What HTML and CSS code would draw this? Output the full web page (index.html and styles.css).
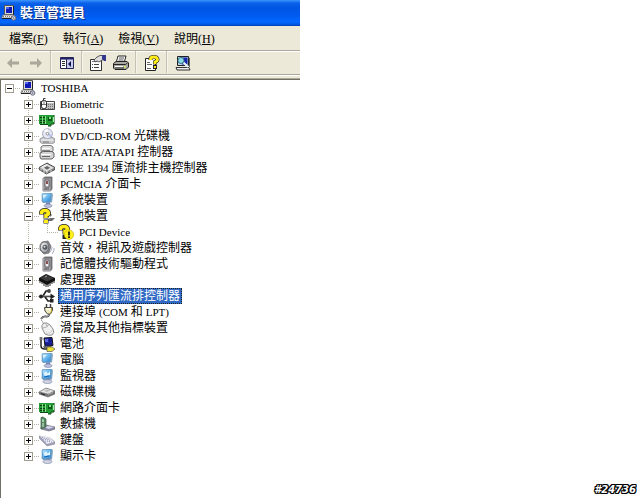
FILE: index.html
```html
<!DOCTYPE html>
<html lang="zh-Hant">
<head>
<meta charset="utf-8">
<title>裝置管理員</title>
<link rel="stylesheet" href="styles.css">
</head>
<body>
<svg class="sprite" aria-hidden="true">
  <defs>
    <linearGradient id="screen" x1="0" y1="0" x2="1" y2="1"><stop offset="0" stop-color="#d4f1ff"/><stop offset=".5" stop-color="#68b8ef"/><stop offset="1" stop-color="#287fce"/></linearGradient>
    <linearGradient id="metal" x1="0" y1="0" x2="1" y2="1"><stop offset="0" stop-color="#fff"/><stop offset="1" stop-color="#8c8c98"/></linearGradient>
  </defs>
  <symbol id="pc" viewBox="0 0 16 16">
    <path d="M3.500 .5h9v9h-9z" fill="#dcdcd4" stroke="#555"/><path d="M12.500 1v9" stroke="#222"/>
    <path d="M5 2h6v6H5z" fill="#1018b8"/><path d="M5 2h3v2H5z" fill="#4c68f0"/>
    <path d="M2 10h11l1 3H.8z" fill="#f2f2ee" stroke="#777" stroke-width=".8"/>
    <path d="M1 13.500h11" stroke="#222"/><path d="M2 11.500h9" stroke="#777" stroke-dasharray="1 1"/>
    <circle cx="12.700" cy="13" r="2.200" fill="#d8dce8" stroke="#667"/><circle cx="12.700" cy="13" r=".7" fill="#556"/>
  </symbol>
  <symbol id="bio" viewBox="0 0 16 16">
    <path d="M1.500 5.500h14v8h-14z" fill="#bcbcbc" stroke="#444"/><path d="M8 6.500h7" stroke="#fff"/>
    <path d="M9 8.500h6M9 10.500h6M9 12.500h6" stroke="#777" stroke-dasharray="1 1"/>
    <path d="M4.500 5V2.500h2" fill="none" stroke="#333"/>
    <rect x="2.500" y="4.500" width="5" height="8" rx="2" fill="#fff" stroke="#222"/><path d="M5 5v3M3 8.500h4" stroke="#555" stroke-width=".8"/>
  </symbol>
  <symbol id="card" viewBox="0 0 16 16">
    <path d="M0 3h15v9h-3v2H9v-2H0z" fill="#239b35"/><path d="M15 3v9h-3v2H9M1 12.500h8" fill="none" stroke="#0c4516"/>
    <path d="M1 5.500h6M1 8.500h6M1 10.500h6" stroke="#0b3d13"/><path d="M3.500 4v8M6.500 4v8" stroke="#87dc88"/>
    <path d="M9 5h4v4H9z" fill="#0c5819"/><path d="M10 5h2v2h-2z" fill="#8ae286"/><path d="M14.500 5v5" stroke="#b5efae"/>
  </symbol>
  <symbol id="cd" viewBox="0 0 16 16">
    <path d="M1 11l3-2h9l3 2v3l-3 2H4l-3-2z" fill="#c6c6cb" stroke="#888" stroke-width=".8"/><path d="M2 12h12" stroke="#fff"/>
    <circle cx="8.500" cy="5.700" r="5" fill="#e4e6f4" stroke="#9a9dac" stroke-width=".8"/>
    <path d="M8.500 5.700L5 2.500a5 5 0 0 1 4-1.500z" fill="#fff"/><path d="M8.500 5.700l4.500 1-2 3z" fill="#b7c4ec"/>
    <circle cx="8.500" cy="5.700" r="1.300" fill="#fff" stroke="#777" stroke-width=".8"/>
    <path d="M4 14h6" stroke="#777"/>
  </symbol>
  <symbol id="ide" viewBox="0 0 16 16">
    <path d="M2 3l2-1.500h8L14 3v4l-2 2H3L2 7z" fill="#ddd" stroke="#666" stroke-width=".9"/><path d="M3 4.500h8" stroke="#fff"/><path d="M3 6.500h8" stroke="#888"/>
    <path d="M1 9l3-1.500h9L15 9v4l-2 2H2l-1-2z" fill="#d4d4d4" stroke="#555" stroke-width=".9"/><path d="M2 10.500h10" stroke="#fff"/><path d="M3 12.500h8" stroke="#666"/>
  </symbol>
  <symbol id="fire" viewBox="0 0 16 16">
    <path d="M0 7.500L8 3l8 4.500v2L7.500 14 0 9.500z" fill="#858585" stroke="#333" stroke-width=".8"/>
    <path d="M1 7.500L8 4l7 3.700-7.500 4z" fill="#dedede"/><path d="M5 7.700l3-1.700 3 1.700-3 2z" fill="#666"/>
    <path d="M8 13.500v-2.500M2 8.500v2M5 10v3M12 10v2" stroke="#eee" stroke-width=".8"/><path d="M3 7l5-2.500" stroke="#fff"/>
  </symbol>
  <symbol id="pcmcia" viewBox="0 0 16 16">
    <path d="M4 2.500L5.500 1H13v12l-1.500 2H4z" fill="#77767b" stroke="#666" stroke-width=".8"/><path d="M4 2.500h7.500V15H4z" fill="#a7a4a9"/>
    <path d="M6 4h4v7H6z" fill="#eeecef" stroke="#444" stroke-width=".8"/><path d="M7 5h2v3H7z" fill="#8c4f51"/><path d="M5 13h5" stroke="#555"/>
  </symbol>
  <symbol id="monitor" viewBox="0 0 16 16">
    <path d="M3 1.500L13 1l1 1.500-1 8-9 .5-1.500-2z" fill="#86a6bd"/>
    <path d="M3 2l9-.5-.5 8-7.500.8z" fill="url(#screen)" stroke="#579ccb" stroke-width=".7"/><path d="M4 3l4-.3-3.600 4z" fill="#fff" opacity=".65"/>
    <path d="M7 10.500l4-.5v3H7z" fill="#7686c4"/><ellipse cx="9" cy="13.700" rx="4" ry="1.700" fill="#bcc2df" stroke="#7f86a6" stroke-width=".7"/>
  </symbol>
  <symbol id="video" viewBox="0 0 16 16">
    <path d="M3 1.500L13 1l1 1.500-1 9-9 .5-1.500-2z" fill="#7ca2be"/>
    <path d="M3 2l9-.5-.5 8.500-7.500.8z" fill="url(#screen)" stroke="#4a94ca" stroke-width=".7"/>
    <path d="M5 5l2-1.500 2 2L11 3v4L5.500 8z" fill="#e3f6ff"/><path d="M5 9l5-1" stroke="#1167b0"/>
    <path d="M7 11l4-.5v2H7z" fill="#7787b4"/><ellipse cx="8.500" cy="13.600" rx="4.500" ry="1.900" fill="#d0d4e6" stroke="#7d86a5" stroke-width=".7"/>
  </symbol>
  <symbol id="unknown" viewBox="0 0 16 16">
    <path d="M8 12l3-2h5l-3 3H9zM11 5l2 2-2 2z" fill="#6d6d6d"/>
    <path d="M2.500 6.500V4.500Q3 2.500 6 2.500T9.500 5Q9.500 6.500 7 7.500V10.500" fill="none" stroke="#222" stroke-width="5"/><path d="M4.500 11.500h5v4h-5z" fill="#222"/>
    <path d="M2.500 6V4.500Q3 2.500 6 2.500T9.500 5Q9.500 6.500 7 7.500V10" fill="none" stroke="#ffec18" stroke-width="3.600"/><path d="M5 12h4v3H5z" fill="#ffec18"/>
  </symbol>
  <symbol id="warn" viewBox="0 0 16 16">
    <path d="M2.500 6.500V4.500Q3 2.500 6 2.500T9.500 5Q9.500 6.500 7 7.500V10.500" fill="none" stroke="#222" stroke-width="5"/><path d="M4.500 11h5v4h-5z" fill="#222"/>
    <path d="M2.500 6V4.500Q3 2.500 6 2.500T9.500 5Q9.500 6.500 7 7.500V10" fill="none" stroke="#ffec18" stroke-width="3.600"/>
    <circle cx="11" cy="10.700" r="4.700" fill="#fff01c" stroke="#cdb900" stroke-width=".7"/><path d="M11 7.500v4M11 12.300v1.700" stroke="#111" stroke-width="1.700"/>
  </symbol>
  <symbol id="sound" viewBox="0 0 16 16">
    <path d="M3 2l6-1 3 5-2 7-5 1-4-4V5z" fill="#83878c" stroke="#666" stroke-width=".7"/><ellipse cx="5.500" cy="7.300" rx="4.200" ry="5.200" fill="url(#metal)" stroke="#666" stroke-width=".8"/>
    <circle cx="6" cy="7.300" r="2.500" fill="#565b60"/><circle cx="5.500" cy="6.800" r="1" fill="#ddd"/>
    <path d="M11 12q2-2 2-5M13 14q2.500-3 2.200-6" fill="none" stroke="#a9acc2"/>
  </symbol>
  <symbol id="cpu" viewBox="0 0 16 16">
    <path d="M1 8v3M3 9v3M5 10v4M7 11v4M9 11v4M11 10v4M13 9v3M15 7v4" stroke="#222"/>
    <path d="M0 6l7-4 9 4v2.500L8 13 0 8.500z" fill="#111"/><path d="M1 6l6-3 8 3-7 3.500z" fill="#3b3b3b"/><path d="M6 5l2-1" stroke="#aaa"/>
  </symbol>
  <symbol id="usb" viewBox="0 0 16 16">
    <path d="M1 8.500h12M4 8l3-5h3M6 9l3 4h3" fill="none" stroke="#222" stroke-width="1.600"/><path d="M11.500 5.500L16 8.500l-4.500 3z" fill="#222"/>
    <circle cx="2" cy="8.500" r="2" fill="#222"/><circle cx="10" cy="3" r="1.900" fill="#444"/><path d="M11 11h3.500v3.500H11z" fill="#222"/><path d="M4 8h7" stroke="#aaa" stroke-width=".7"/>
  </symbol>
  <symbol id="plug" viewBox="0 0 16 16">
    <path d="M7.500 0v4M11.500 0v4" stroke="#444" stroke-width="1.500"/><path d="M5.500 3.500h8V6l-2 4H8.500L6 7z" fill="#eee8bc" stroke="#444"/>
    <path d="M7 5h5" stroke="#fff"/><path d="M12.500 4v3l-1.500 3" stroke="#bea92f" fill="none"/>
    <path d="M10 10q0 3-3 2.500T2 15" fill="none" stroke="#333" stroke-width="1.800"/><path d="M10 10q0 3-3 2.500T2 15" fill="none" stroke="#ddd" stroke-width=".6"/>
  </symbol>
  <symbol id="mouse" viewBox="0 0 16 16">
    <path d="M2 0q2 1 2.500 4" fill="none" stroke="#999"/><path d="M5 3q3-1 6 2l3 4q2 4-1 6-4 1-7-1L3 8q-1-3 2-5z" fill="#f0f0f0" stroke="#8c8c8c"/>
    <path d="M4 8q4 0 6-4M6.500 3.500l2 3" fill="none" stroke="#aaa"/><path d="M7 13q5 1 6-3" stroke="#ccc" fill="none"/>
  </symbol>
  <symbol id="battery" viewBox="0 0 16 16">
    <path d="M2 1v9q0 3 4 3h3" fill="none" stroke="#222" stroke-width="1.500"/><path d="M5 2l8-.5 1 8-8 .7z" fill="#2028a8" stroke="#111"/>
    <path d="M6 3h3v3H6z" fill="#5965e0"/><path d="M10 3h3M10 5h3M6 8h7" stroke="#0a0f68"/><path d="M4 10h9l-2 2H5z" fill="#666"/>
    <path d="M8 11h5l3 2-3 2.500H8z" fill="#f2e235" stroke="#555" stroke-width=".7"/><path d="M1 1v3M3 1v3" stroke="#888"/>
  </symbol>
  <symbol id="disk" viewBox="0 0 16 16">
    <path d="M0 8l7-4 9 3v3l-7 3-9-3z" fill="#77777b" stroke="#666" stroke-width=".6"/><path d="M1 7.700L7 4.500 15 7 9 9.700z" fill="#e4e4e4"/>
    <path d="M5 6.700L8 5.500l3 1.200-3 1.300z" fill="#bbb"/><path d="M2 9.500l4 1.400" stroke="#222"/><path d="M9 10.500l5-2" stroke="#aaa"/>
  </symbol>
  <symbol id="modem" viewBox="0 0 16 16">
    <path d="M2 11l5-2 9 2v2l-6 2-8-2z" fill="#8789a8" stroke="#666" stroke-width=".6"/><path d="M4 11l5-1 6 1-5 2z" fill="#d3d4e7"/>
    <path d="M2 1.500L4 1l3 2v8l-5 2z" fill="#588764" stroke="#385c40" stroke-width=".7"/><path d="M3 3l2 .5V6L3 6z" fill="#9fd2a4"/><path d="M3 8h2M3 10h2" stroke="#d7ead7"/>
  </symbol>
  <symbol id="keys" viewBox="0 0 16 16">
    <path d="M0 4l11 2 5 4v2l-8 2-8-8z" fill="#9c9dba" stroke="#888" stroke-width=".5"/><path d="M1 4l10 2 4 4-7 2z" fill="#ededf7"/>
    <path d="M3 5.500l8 2M4 7l8 1.500M6 9l7 1" stroke="#9193b6" stroke-dasharray="1 1"/>
  </symbol>
  <symbol id="back" viewBox="0 0 16 16"><path d="M2 8l5-5v3.500h7v3H7V13z" fill="#aca899"/></symbol>
  <symbol id="forward" viewBox="0 0 16 16"><path d="M14 8L9 3v3.500H2v3h7V13z" fill="#aca899"/></symbol>
  <symbol id="pane" viewBox="0 0 16 16">
    <path d="M1.500 2.500h13v11h-13z" fill="#c9cdec" stroke="#252557"/><path d="M2 3h12v1.500H2z" fill="#24246b"/><path d="M2 5h5v8H2z" fill="#fff"/><path d="M7.500 4v9" stroke="#252557"/>
    <path d="M3 6.500h3M3 8.500h3M3 10.500h3" stroke="#333"/><path d="M12 6v6L9 9z" fill="#111155"/>
  </symbol>
  <symbol id="props" viewBox="0 0 16 16">
    <path d="M.500 4.500h11v11H.5z" fill="#fff" stroke="#333"/><path d="M2 9.500h1M4 9.500h5M2 12.500h1M4 12.500h5" stroke="#444"/><path d="M2 6.500h5" stroke="#777"/>
    <path d="M4 5l3-3 3-1.500h3v4L9 7 7 6 5 7z" fill="#ddd" stroke="#333" stroke-width=".8"/><path d="M12 0h4v6h-2l-2-2z" fill="#34388f"/>
  </symbol>
  <symbol id="print" viewBox="0 0 16 16">
    <path d="M5 1h8l-2 7H3z" fill="#fff" stroke="#222"/><path d="M6 3h5M5.500 5h5" stroke="#555"/>
    <path d="M.5 8.500L3 6.500h11l1.500 1.500v4L13 14.500H2L.5 13z" fill="#aaaaa3" stroke="#222"/><path d="M1 9.500h11.500l2-1.500" fill="none" stroke="#222"/>
    <path d="M2 11.500h8" stroke="#fff"/><path d="M2 13h9" stroke="#333"/><path d="M11 11h1.500v1.500H11z" fill="#df4"/>
  </symbol>
  <symbol id="help" viewBox="0 0 16 16">
    <path d="M1.500 3.500h10v12h-10z" fill="#fff" stroke="#222"/><path d="M3 7.500h3M3 9.500h5M3 13.500h4" stroke="#666"/>
    <path d="M6.500 5V3.500Q7 2 10 2T13.500 4.500Q13.500 6 11 7V9.500" fill="none" stroke="#222" stroke-width="4"/><path d="M9 10h4v4H9z" fill="#222"/>
    <path d="M6.500 5V3.500Q7 2 10 2T13.500 4.500Q13.500 6 11 7V9" fill="none" stroke="#ffec18" stroke-width="2.800"/><path d="M10 11h2v2h-2z" fill="#ffec18"/>
  </symbol>
  <symbol id="scan" viewBox="0 0 16 16">
    <path d="M2.500 1.500h11v9h-11z" fill="#b9d4e4" stroke="#222"/><path d="M7 2.500h5.500v7H7z" fill="#1724b0"/>
    <path d="M1 12.500h13l1 2.500H2z" fill="#eee" stroke="#333"/><path d="M13.500 3h1v9" stroke="#666" fill="none"/>
    <path d="M8 7l5 5" stroke="#e7f6fb" stroke-width="2"/><circle cx="6" cy="5.500" r="3" fill="#8cdbe8" stroke="#37748b"/>
  </symbol>
</svg>

<div class="desktop">
  <main class="window">
    <header class="titlebar">
      <svg class="icon"><use href="#pc"/></svg>
      <h1>裝置管理員</h1>
    </header>
    <nav class="menubar">
      <button>檔案(<u>F</u>)</button>
      <button>執行(<u>A</u>)</button>
      <button>檢視(<u>V</u>)</button>
      <button>說明(<u>H</u>)</button>
    </nav>
    <div class="toolbar" role="toolbar">
      <button disabled aria-label="上一頁"><svg class="icon"><use href="#back"/></svg></button>
      <button disabled aria-label="下一頁"><svg class="icon"><use href="#forward"/></svg></button>
      <i class="divider"></i>
      <button aria-label="顯示主控台樹狀目錄"><svg class="icon"><use href="#pane"/></svg></button>
      <i class="divider"></i>
      <button aria-label="內容"><svg class="icon"><use href="#props"/></svg></button>
      <button aria-label="列印"><svg class="icon"><use href="#print"/></svg></button>
      <i class="divider"></i>
      <button aria-label="說明"><svg class="icon"><use href="#help"/></svg></button>
      <i class="divider"></i>
      <button aria-label="掃描硬體變更"><svg class="icon"><use href="#scan"/></svg></button>
    </div>
    <div class="tree">
      <div class="row root"><span class="branch"><button class="toggle open" aria-label="摺疊"></button></span><svg class="icon"><use href="#pc"/></svg><span class="label"><span lang="en">TOSHIBA</span></span></div>
      <ul>
        <li class="row"><span class="branch"><button class="toggle" aria-label="展開"></button></span><svg class="icon"><use href="#bio"/></svg><span class="label"><span lang="en">Biometric</span></span></li>
        <li class="row"><span class="branch"><button class="toggle" aria-label="展開"></button></span><svg class="icon"><use href="#card"/></svg><span class="label"><span lang="en">Bluetooth</span></span></li>
        <li class="row"><span class="branch"><button class="toggle" aria-label="展開"></button></span><svg class="icon"><use href="#cd"/></svg><span class="label"><span lang="en">DVD/CD-ROM</span> 光碟機</span></li>
        <li class="row"><span class="branch"><button class="toggle" aria-label="展開"></button></span><svg class="icon"><use href="#ide"/></svg><span class="label"><span lang="en">IDE ATA/ATAPI</span> 控制器</span></li>
        <li class="row"><span class="branch"><button class="toggle" aria-label="展開"></button></span><svg class="icon"><use href="#fire"/></svg><span class="label"><span lang="en">IEEE 1394</span> 匯流排主機控制器</span></li>
        <li class="row"><span class="branch"><button class="toggle" aria-label="展開"></button></span><svg class="icon"><use href="#pcmcia"/></svg><span class="label"><span lang="en">PCMCIA</span> 介面卡</span></li>
        <li class="row"><span class="branch"><button class="toggle" aria-label="展開"></button></span><svg class="icon"><use href="#monitor"/></svg><span class="label">系統裝置</span></li>
        <li>
          <div class="row"><span class="branch"><button class="toggle open" aria-label="摺疊"></button></span><svg class="icon"><use href="#unknown"/></svg><span class="label">其他裝置</span></div>
          <div class="row last"><span class="trunk"></span><span class="branch"></span><svg class="icon"><use href="#warn"/></svg><span class="label"><span lang="en">PCI Device</span></span></div>
        </li>
        <li class="row"><span class="branch"><button class="toggle" aria-label="展開"></button></span><svg class="icon"><use href="#sound"/></svg><span class="label">音效，視訊及遊戲控制器</span></li>
        <li class="row"><span class="branch"><button class="toggle" aria-label="展開"></button></span><svg class="icon"><use href="#pcmcia"/></svg><span class="label">記憶體技術驅動程式</span></li>
        <li class="row"><span class="branch"><button class="toggle" aria-label="展開"></button></span><svg class="icon"><use href="#cpu"/></svg><span class="label">處理器</span></li>
        <li class="row"><span class="branch"><button class="toggle" aria-label="展開"></button></span><svg class="icon"><use href="#usb"/></svg><span class="label selected">通用序列匯流排控制器</span></li>
        <li class="row"><span class="branch"><button class="toggle" aria-label="展開"></button></span><svg class="icon"><use href="#plug"/></svg><span class="label">連接埠 <span lang="en">(COM</span> 和 <span lang="en">LPT)</span></span></li>
        <li class="row"><span class="branch"><button class="toggle" aria-label="展開"></button></span><svg class="icon"><use href="#mouse"/></svg><span class="label">滑鼠及其他指標裝置</span></li>
        <li class="row"><span class="branch"><button class="toggle" aria-label="展開"></button></span><svg class="icon"><use href="#battery"/></svg><span class="label">電池</span></li>
        <li class="row"><span class="branch"><button class="toggle" aria-label="展開"></button></span><svg class="icon"><use href="#monitor"/></svg><span class="label">電腦</span></li>
        <li class="row"><span class="branch"><button class="toggle" aria-label="展開"></button></span><svg class="icon"><use href="#video"/></svg><span class="label">監視器</span></li>
        <li class="row"><span class="branch"><button class="toggle" aria-label="展開"></button></span><svg class="icon"><use href="#disk"/></svg><span class="label">磁碟機</span></li>
        <li class="row"><span class="branch"><button class="toggle" aria-label="展開"></button></span><svg class="icon"><use href="#card"/></svg><span class="label">網路介面卡</span></li>
        <li class="row"><span class="branch"><button class="toggle" aria-label="展開"></button></span><svg class="icon"><use href="#modem"/></svg><span class="label">數據機</span></li>
        <li class="row"><span class="branch"><button class="toggle" aria-label="展開"></button></span><svg class="icon"><use href="#keys"/></svg><span class="label">鍵盤</span></li>
        <li class="row last"><span class="branch"><button class="toggle" aria-label="展開"></button></span><svg class="icon"><use href="#video"/></svg><span class="label">顯示卡</span></li>
      </ul>
    </div>
  </main>
  <aside class="side"><span class="stamp">#24736</span></aside>
</div>
</body>
</html>
```
FILE: styles.css
```css
* { box-sizing: border-box; }

body {
  margin: 0;
  background: #fff;
  color: #000;
  font: 12px/16px "Liberation Serif", "Noto Sans CJK TC", serif;
}

button {
  margin: 0;
  padding: 0;
  border: 0;
  background: none;
  color: inherit;
  font: inherit;
}

.sprite { position: absolute; width: 0; height: 0; }
.icon { display: block; flex: none; width: 16px; height: 16px; }

.desktop { display: flex; min-height: 100vh; }
.window { flex: 15; min-width: 0; display: flex; flex-direction: column; }

.side {
  flex: 17;
  display: flex;
  align-items: flex-end;
  justify-content: flex-end;
}

.titlebar {
  display: flex;
  align-items: center;
  gap: 3px;
  height: 26px;
  padding: 0 1px;
  background: linear-gradient(#3d95ff 0, #0b62ea 3px, #0055e2 8px, #005bf0 16px, #0468ff 22px, #0052d8 25px, #0038a8 26px);
}

h1 {
  margin: 0;
  color: #fff;
  font-size: 13px;
  font-weight: 700;
  text-shadow: 1px 1px #0a2c80;
}

.menubar {
  display: flex;
  gap: 15px;
  height: 25px;
  padding: 2px 9px 0;
  background: #ece9d8;
  border-bottom: 1px solid #aca899;
}

.toolbar {
  display: flex;
  height: 29px;
  padding: 0 1px;
  background: linear-gradient(#fff 1px, #ece9d8 1px 23px, #aca899 23px 24px, #fff 24px 25px, #ece9d8 25px 27px, #aca899 27px 28px, #716f64 28px);
}

.toolbar button {
  display: grid;
  place-items: center;
  width: 23px;
  height: 24px;
}

.divider {
  width: 8px;
  height: 22px;
  background: linear-gradient(90deg, transparent 3px, #c5c2b4 3px 4px, #f6f4ec 4px 5px, transparent 5px);
}

.tree {
  flex: 1;
  border-left: 1px solid #716f64;
  white-space: nowrap;
}

.tree ul { margin: 0; padding: 0 0 0 19px; list-style: none; }
.row { display: flex; align-items: center; height: 16px; }

.branch, .trunk {
  --dots-down: repeating-linear-gradient(#b5b2a4 0 1px, transparent 1px 2px);
  --dots-across: repeating-linear-gradient(90deg, #b5b2a4 0 1px, transparent 1px 2px);
  flex: none;
  width: 19px;
  height: 16px;
  background: var(--dots-down) 8px 0 / 1px 16px no-repeat;
}

.branch {
  padding: 4px;
  background: var(--dots-down) 8px 0 / 1px 16px no-repeat, var(--dots-across) 8px 8px / 11px 1px no-repeat;
}

.root .branch { background: var(--dots-across) 8px 8px / 11px 1px no-repeat; }
.last .branch { background: var(--dots-down) 8px 0 / 1px 8px no-repeat, var(--dots-across) 8px 8px / 11px 1px no-repeat; }

.toggle {
  display: block;
  width: 9px;
  height: 9px;
  border: 1px solid #a09d90;
  background:
    linear-gradient(#000, #000) 1px 3px / 5px 1px no-repeat,
    linear-gradient(#000, #000) 3px 1px / 1px 5px no-repeat,
    #fff;
}

.toggle.open { background: linear-gradient(#000, #000) 1px 3px / 5px 1px no-repeat, #fff; }

.label {
  height: 16px;
  margin-left: 3px;
  padding: 0 2px;
}

.label [lang="en"] { font-size: 11px; }

.selected {
  background: #316ac5;
  color: #fff;
  outline: 1px dotted #222;
  outline-offset: -1px;
}

.stamp {
  padding: 0 4px 0 0;
  color: #fff;
  font: italic bold 10px/16px "DejaVu Sans", sans-serif;
  text-shadow: 1px 0 #000, -1px 0 #000, 0 1px #000, 0 -1px #000, 1px 1px #000, -1px -1px #000, 1px -1px #000, -1px 1px #000;
}
```
